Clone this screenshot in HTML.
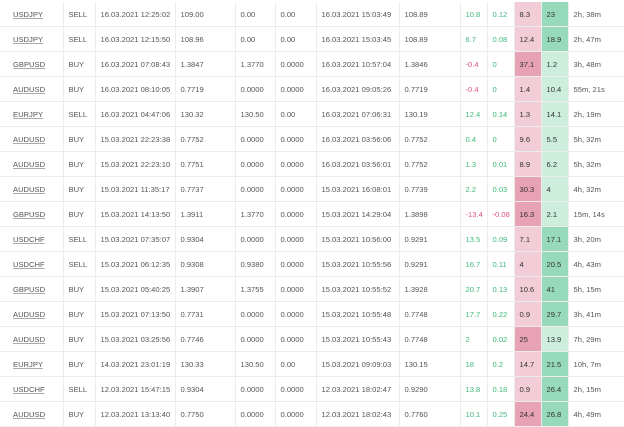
<!DOCTYPE html>
<html><head><meta charset="utf-8"><style>
body{margin:0;background:#fff;width:624px;height:427px;overflow:hidden;font-family:"Liberation Sans",sans-serif;font-size:7.6px;color:#555}
table{border-collapse:collapse;position:absolute;top:2px;left:0;table-layout:fixed}
td{height:24px;border-bottom:1px solid #ececec;border-right:1px solid #ececec;padding:0 0 0 5px;white-space:nowrap;overflow:hidden}
td:last-child{border-right:none}
td.s{padding-left:13px}
td.s span{text-decoration:underline;text-decoration-color:#aaa}
.g{color:#3fb97a}.r{color:#e0557a}
.lp{background:#f2ccd6}.dp{background:#e7a2b5}.lg{background:#cdeedd}.dg{background:#97dabb}
td.c{color:#333}
</style></head><body>
<table>
<colgroup><col style="width:63px"><col style="width:32px"><col style="width:80px"><col style="width:60px"><col style="width:40px"><col style="width:41px"><col style="width:83px"><col style="width:61px"><col style="width:27px"><col style="width:27px"><col style="width:27px"><col style="width:27px"><col style="width:56px"></colgroup>
<tr><td class="s"><span>USDJPY</span></td><td>SELL</td><td>16.03.2021 12:25:02</td><td>109.00</td><td>0.00</td><td>0.00</td><td>16.03.2021 15:03:49</td><td>108.89</td><td class="g">10.8</td><td class="g">0.12</td><td class="c lp">8.3</td><td class="c dg">23</td><td>2h, 38m</td></tr>
<tr><td class="s"><span>USDJPY</span></td><td>SELL</td><td>16.03.2021 12:15:50</td><td>108.96</td><td>0.00</td><td>0.00</td><td>16.03.2021 15:03:45</td><td>108.89</td><td class="g">6.7</td><td class="g">0.08</td><td class="c lp">12.4</td><td class="c dg">18.9</td><td>2h, 47m</td></tr>
<tr><td class="s"><span>GBPUSD</span></td><td>BUY</td><td>16.03.2021 07:08:43</td><td>1.3847</td><td>1.3770</td><td>0.0000</td><td>16.03.2021 10:57:04</td><td>1.3846</td><td class="r">-0.4</td><td class="g">0</td><td class="c dp">37.1</td><td class="c lg">1.2</td><td>3h, 48m</td></tr>
<tr><td class="s"><span>AUDUSD</span></td><td>BUY</td><td>16.03.2021 08:10:05</td><td>0.7719</td><td>0.0000</td><td>0.0000</td><td>16.03.2021 09:05:26</td><td>0.7719</td><td class="r">-0.4</td><td class="g">0</td><td class="c lp">1.4</td><td class="c lg">10.4</td><td>55m, 21s</td></tr>
<tr><td class="s"><span>EURJPY</span></td><td>SELL</td><td>16.03.2021 04:47:06</td><td>130.32</td><td>130.50</td><td>0.00</td><td>16.03.2021 07:06:31</td><td>130.19</td><td class="g">12.4</td><td class="g">0.14</td><td class="c lp">1.3</td><td class="c lg">14.1</td><td>2h, 19m</td></tr>
<tr><td class="s"><span>AUDUSD</span></td><td>BUY</td><td>15.03.2021 22:23:38</td><td>0.7752</td><td>0.0000</td><td>0.0000</td><td>16.03.2021 03:56:06</td><td>0.7752</td><td class="g">0.4</td><td class="g">0</td><td class="c lp">9.6</td><td class="c lg">5.5</td><td>5h, 32m</td></tr>
<tr><td class="s"><span>AUDUSD</span></td><td>BUY</td><td>15.03.2021 22:23:10</td><td>0.7751</td><td>0.0000</td><td>0.0000</td><td>16.03.2021 03:56:01</td><td>0.7752</td><td class="g">1.3</td><td class="g">0.01</td><td class="c lp">8.9</td><td class="c lg">6.2</td><td>5h, 32m</td></tr>
<tr><td class="s"><span>AUDUSD</span></td><td>BUY</td><td>15.03.2021 11:35:17</td><td>0.7737</td><td>0.0000</td><td>0.0000</td><td>15.03.2021 16:08:01</td><td>0.7739</td><td class="g">2.2</td><td class="g">0.03</td><td class="c dp">30.3</td><td class="c lg">4</td><td>4h, 32m</td></tr>
<tr><td class="s"><span>GBPUSD</span></td><td>BUY</td><td>15.03.2021 14:13:50</td><td>1.3911</td><td>1.3770</td><td>0.0000</td><td>15.03.2021 14:29:04</td><td>1.3898</td><td class="r">-13.4</td><td class="r">-0.08</td><td class="c dp">16.3</td><td class="c lg">2.1</td><td>15m, 14s</td></tr>
<tr><td class="s"><span>USDCHF</span></td><td>SELL</td><td>15.03.2021 07:35:07</td><td>0.9304</td><td>0.0000</td><td>0.0000</td><td>15.03.2021 10:56:00</td><td>0.9291</td><td class="g">13.5</td><td class="g">0.09</td><td class="c lp">7.1</td><td class="c dg">17.1</td><td>3h, 20m</td></tr>
<tr><td class="s"><span>USDCHF</span></td><td>SELL</td><td>15.03.2021 06:12:35</td><td>0.9308</td><td>0.9380</td><td>0.0000</td><td>15.03.2021 10:55:56</td><td>0.9291</td><td class="g">16.7</td><td class="g">0.11</td><td class="c lp">4</td><td class="c dg">20.5</td><td>4h, 43m</td></tr>
<tr><td class="s"><span>GBPUSD</span></td><td>BUY</td><td>15.03.2021 05:40:25</td><td>1.3907</td><td>1.3755</td><td>0.0000</td><td>15.03.2021 10:55:52</td><td>1.3928</td><td class="g">20.7</td><td class="g">0.13</td><td class="c lp">10.6</td><td class="c dg">41</td><td>5h, 15m</td></tr>
<tr><td class="s"><span>AUDUSD</span></td><td>BUY</td><td>15.03.2021 07:13:50</td><td>0.7731</td><td>0.0000</td><td>0.0000</td><td>15.03.2021 10:55:48</td><td>0.7748</td><td class="g">17.7</td><td class="g">0.22</td><td class="c lp">0.9</td><td class="c dg">29.7</td><td>3h, 41m</td></tr>
<tr><td class="s"><span>AUDUSD</span></td><td>BUY</td><td>15.03.2021 03:25:56</td><td>0.7746</td><td>0.0000</td><td>0.0000</td><td>15.03.2021 10:55:43</td><td>0.7748</td><td class="g">2</td><td class="g">0.02</td><td class="c dp">25</td><td class="c lg">13.9</td><td>7h, 29m</td></tr>
<tr><td class="s"><span>EURJPY</span></td><td>BUY</td><td>14.03.2021 23:01:19</td><td>130.33</td><td>130.50</td><td>0.00</td><td>15.03.2021 09:09:03</td><td>130.15</td><td class="g">18</td><td class="g">0.2</td><td class="c lp">14.7</td><td class="c dg">21.5</td><td>10h, 7m</td></tr>
<tr><td class="s"><span>USDCHF</span></td><td>SELL</td><td>12.03.2021 15:47:15</td><td>0.9304</td><td>0.0000</td><td>0.0000</td><td>12.03.2021 18:02:47</td><td>0.9290</td><td class="g">13.8</td><td class="g">0.18</td><td class="c lp">0.9</td><td class="c dg">26.4</td><td>2h, 15m</td></tr>
<tr><td class="s"><span>AUDUSD</span></td><td>BUY</td><td>12.03.2021 13:13:40</td><td>0.7750</td><td>0.0000</td><td>0.0000</td><td>12.03.2021 18:02:43</td><td>0.7760</td><td class="g">10.1</td><td class="g">0.25</td><td class="c dp">24.4</td><td class="c dg">26.8</td><td>4h, 49m</td></tr>
</table>
</body></html>
